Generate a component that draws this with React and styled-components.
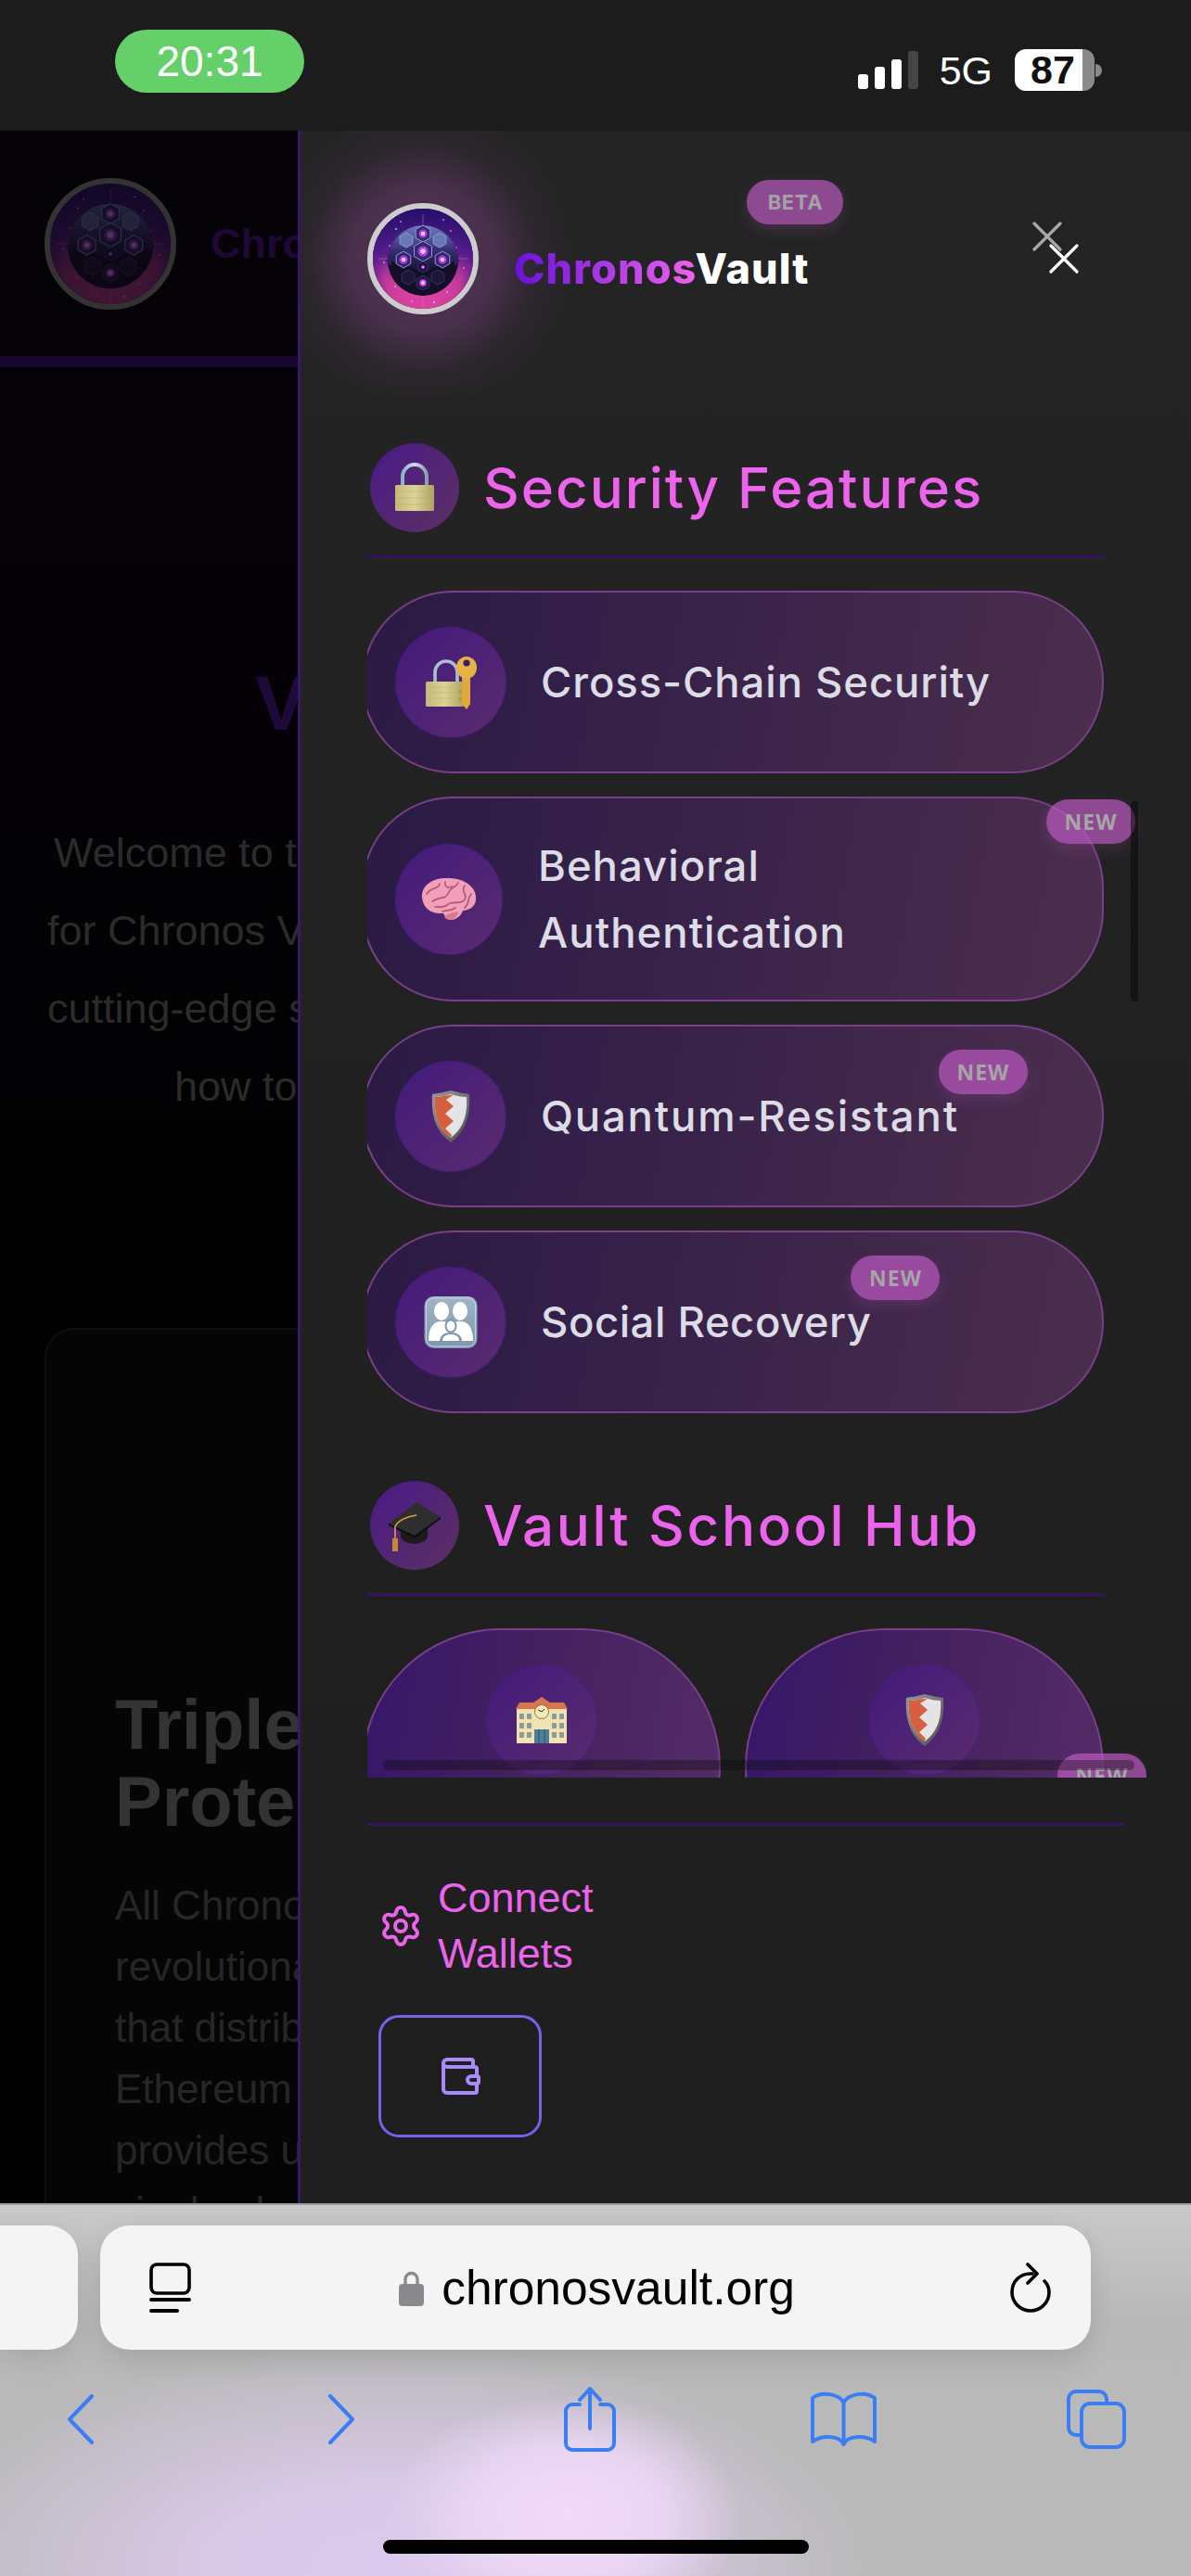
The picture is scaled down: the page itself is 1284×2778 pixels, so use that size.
import React from 'react';
import styled, { createGlobalStyle } from 'styled-components';
import { X, Settings, Wallet } from 'lucide-react';

const GlobalStyle = createGlobalStyle`
  html, body {
    margin: 0;
    padding: 0;
    background: #1c1c1c;
    overflow: hidden;
  }
  * { box-sizing: border-box; }
`;

const Screen = styled.div`
  width: 1284px;
  height: 2778px;
  display: flex;
  flex-direction: column;
  overflow: hidden;
  font-family: 'Liberation Sans', Arial, sans-serif;
`;

/* ---------- status bar ---------- */
const StatusBar = styled.div`
  height: 141px;
  flex: none;
  background: #1c1c1c;
  display: flex;
  justify-content: space-between;
  padding: 32px 96px 0 124px;
`;

const TimePill = styled.div`
  width: 204px;
  height: 68px;
  border-radius: 34px / 34px;
  background: #65d06a;
  color: #fff;
  font-size: 46px;
  line-height: 68px;
  text-align: center;
`;

const StatusRight = styled.div`
  display: flex;
  align-items: flex-end;
  height: 66px;
`;

const Bars = styled.div`
  display: flex;
  align-items: flex-end;
  gap: 7px;
  height: 41px;
  margin-bottom: 2px;
`;

const Bar = styled.div`
  width: 11px;
  height: ${p => p.$h}px;
  border-radius: 3px;
  background: ${p => (p.$off ? '#454545' : '#fff')};
`;

const Network = styled.div`
  color: #fff;
  font-size: 43px;
  line-height: 44px;
  margin: 0 24px 0 23px;
`;

const Battery = styled.div`
  position: relative;
  width: 86px;
  height: 45px;
  margin-right: 8px;
  border-radius: 12px;
  background: linear-gradient(90deg, #fff 85%, #8a8a8a 85%);
  color: #111;
  font-size: 43px;
  font-weight: 700;
  line-height: 45px;
  padding-left: 17px;

  &::after {
    content: '';
    position: absolute;
    left: 87px;
    top: 16px;
    width: 7px;
    height: 14px;
    border-radius: 0 7px 7px 0;
    background: #8a8a8a;
  }
`;

/* ---------- main split ---------- */
const Main = styled.div`
  flex: 1;
  min-height: 0;
  display: flex;
`;

const Backdrop = styled.div`
  width: 321px;
  flex: none;
  overflow: hidden;
  white-space: nowrap;
  background: linear-gradient(180deg, #060308 0%, #040206 30%, #000 60%);
`;

const PageHeader = styled.div`
  height: 243px;
  padding-left: 48px;
  display: flex;
  align-items: center;
  gap: 37px;
`;

const PageLogo = styled.div`
  width: 142px;
  height: 142px;
  flex: none;
  border-radius: 50%;
  border: 6px solid #333;
  overflow: hidden;
  background: #0c0610;

  svg {
    display: block;
    width: 100%;
    height: 100%;
    opacity: 0.26;
  }
`;

const PageBrand = styled.div`
  font-size: 45px;
  font-weight: 700;
  color: #1d0836;
`;

const PageRule = styled.div`
  height: 12px;
  background: #17062e;
`;

const PageTitle = styled.div`
  margin: 320px 0 78px 275px;
  font-size: 84px;
  line-height: 84px;
  font-weight: 700;
  color: #1e0a38;
`;

const PageLine = styled.div`
  padding-left: ${p => p.$pad}px;
  font-size: 45px;
  line-height: 84px;
  color: #2b2b2b;
`;

const PageCard = styled.div`
  margin: 218px 0 0 48px;
  width: 900px;
  height: 1200px;
  padding: 384px 0 0 74px;
  border: 2px solid #0f0f0f;
  border-radius: 32px;
  background: #050505;
`;

const PageCardTitle = styled.div`
  font-size: 76px;
  line-height: 83px;
  font-weight: 700;
  color: #333;
`;

const PageCardText = styled.div`
  margin-top: 38px;
  font-size: 44px;
  line-height: 66px;
  color: #262626;
`;

/* ---------- drawer ---------- */
const Panel = styled.div`
  flex: 1;
  min-width: 0;
  display: flex;
  flex-direction: column;
  border-left: 3px solid #37196a;
  background: linear-gradient(180deg, #242424 0%, #1e1e1e 100%);
`;

const PanelHeader = styled.div`
  position: relative;
  height: 289px;
  flex: none;
  padding: 78px 0 0 72px;
  display: flex;
  align-items: flex-start;
  gap: 38px;

  &::before {
    content: '';
    position: absolute;
    left: 0;
    top: 0;
    width: 300px;
    height: 289px;
    background: radial-gradient(circle 170px at 132px 138px, #503551 0%, #4a304d 45%, rgba(50, 40, 52, 0.6) 72%, rgba(36, 36, 36, 0) 100%);
  }
`;

const Logo = styled.div`
  position: relative;
  width: 120px;
  height: 120px;
  flex: none;
  border-radius: 50%;
  border: 6px solid #cdcdcd;
  overflow: hidden;

  svg {
    display: block;
    width: 100%;
    height: 100%;
  }
`;

const Brand = styled.div`
  position: relative;
  margin-top: 44px;
  font-family: Inter, sans-serif;
  font-size: 45px;
  line-height: 54px;
  font-weight: 800;
  color: #fff;
  letter-spacing: 1.1px;
`;

const BrandAccent = styled.span`
  background: linear-gradient(90deg, #6a10dc 0%, #ee62ee 100%);
  -webkit-background-clip: text;
  background-clip: text;
  color: transparent;
`;

const BetaBadge = styled.div`
  position: absolute;
  right: -37px;
  top: -69px;
  width: 104px;
  height: 48px;
  border-radius: 24px;
  background: #8d4a90;
  box-shadow: 0 6px 16px rgba(180, 90, 190, 0.22);
  color: #a3a3a3;
  font-family: Inter, sans-serif;
  font-size: 22px;
  font-weight: 700;
  letter-spacing: 0.6px;
  line-height: 48px;
  text-align: center;
`;

const CloseIcon = styled(X)`
  position: absolute;
  left: ${p => p.$x}px;
  top: ${p => p.$y}px;
  color: ${p => p.$color};
`;

const ScrollArea = styled.div`
  position: relative;
  width: 840px;
  height: 1487px;
  flex: none;
  margin-left: 72px;
  padding-top: 48px;
  overflow: hidden;
`;

const SectionHead = styled.div`
  display: flex;
  align-items: center;
  gap: 26px;
  padding-left: 3px;
  height: 96px;
  margin-top: ${p => p.$top || 0}px;
`;

const HeadIcon = styled.div`
  width: 96px;
  height: 96px;
  flex: none;
  border-radius: 50%;
  display: flex;
  align-items: center;
  justify-content: center;
  background: linear-gradient(135deg, #491a88 0%, #5c3062 100%);
`;

const HeadText = styled.div`
  font-family: Inter, sans-serif;
  font-size: 60px;
  font-weight: 500;
  color: #ec63ec;
  letter-spacing: ${p => p.$ls}px;
  white-space: nowrap;
`;

const Rule = styled.div`
  width: ${p => p.$w || 795}px;
  height: 3px;
  margin-top: 25px;
  background: #33155f;
`;

const CardList = styled.div`
  margin: 35px 0 0 -6px;
  width: 800px;
  display: flex;
  flex-direction: column;
  gap: 25px;
`;

const Card = styled.div`
  display: flex;
  align-items: center;
  padding: 36.5px 38px 36.5px 34px;
  gap: ${p => (p.$narrow ? 38 : 37)}px;
  border: 2px solid #7a3f8a;
  border-radius: 98px;
  background: linear-gradient(100deg, #2a1a44 0%, #39224a 45%, #4b2e4d 100%);
`;

const IconCircle = styled.div`
  width: ${p => (p.$narrow ? 116 : 120)}px;
  height: 120px;
  flex: none;
  border-radius: 50%;
  display: flex;
  align-items: center;
  justify-content: center;
  border: 1.5px solid #471c86;
  background: linear-gradient(135deg, #431a7c 0%, #5a2b6e 100%);
`;

const CardText = styled.div`
  position: relative;
  flex: ${p => (p.$fill ? 1 : 'none')};
  font-family: Inter, sans-serif;
  font-size: 45.5px;
  line-height: 72px;
  font-weight: 500;
  color: #dcdce6;
  letter-spacing: ${p => p.$ls || 0}px;
  white-space: nowrap;
`;

const NewBadge = styled.div`
  position: absolute;
  right: ${p => p.$right ?? -74}px;
  top: ${p => p.$top ?? -36}px;
  width: 96px;
  height: 48px;
  border-radius: 24px;
  background: rgba(190, 90, 195, 0.7);
  box-shadow: 0 6px 16px rgba(180, 90, 190, 0.2);
  color: #a6a6a6;
  font-family: 'Open Sans', sans-serif;
  font-size: 23px;
  font-weight: 700;
  letter-spacing: 1px;
  line-height: 48px;
  text-align: center;
`;

const TileGrid = styled.div`
  display: grid;
  grid-template-columns: 387px 387px;
  gap: 26px;
  width: 800px;
  margin: 35px 0 0 -6px;
`;

const Tile = styled.div`
  position: relative;
  height: 300px;
  padding-top: 37px;
  display: flex;
  justify-content: center;
  border: 2px solid #7a3f8a;
  border-radius: 172px;
  background: linear-gradient(100deg, #36166a 0%, #44215f 45%, #552c68 100%);
`;

const VerticalTrack = styled.div`
  position: absolute;
  left: 823px;
  top: 434px;
  width: 8px;
  height: 216px;
  border-radius: 4px;
  background: rgba(10, 10, 10, 0.55);
`;

const HorizontalTrack = styled.div`
  position: absolute;
  left: 17px;
  top: 1468px;
  width: 810px;
  height: 11px;
  border-radius: 6px;
  background: rgba(10, 10, 10, 0.36);
`;

const Footer = styled.div`
  padding: 24px 0 0 72px;
`;

const FooterLink = styled.div`
  display: flex;
  align-items: center;
  gap: 16px;
  margin: 48px 0 0 12px;
  color: #ec63ec;
  font-size: 45px;
  line-height: 60px;
`;

const WalletButton = styled.div`
  width: 176px;
  height: 132px;
  margin: 36px 0 0 12px;
  border: 3px solid #7c5fe8;
  border-radius: 22px;
  display: flex;
  align-items: center;
  justify-content: center;
  color: #a78bfa;
`;

/* ---------- safari chrome ---------- */
const Chrome = styled.div`
  height: 402px;
  flex: none;
  border-top: 2px solid #9c9c9c;
  padding-top: 22px;
  display: flex;
  flex-direction: column;
  background:
    radial-gradient(ellipse 190px 130px at 610px 335px, #f2daf8 0%, #e9d5f3 55%, rgba(226, 208, 238, 0) 100%),
    radial-gradient(ellipse 520px 240px at 420px 390px, #dcc9ee 0%, #d8c8e6 38%, rgba(187, 187, 187, 0) 100%),
    linear-gradient(180deg, #c9c9c9 0%, #b9b9b9 30%, #bababa 100%);
`;

const UrlRow = styled.div`
  display: flex;
  gap: 24px;
  height: 134px;
  flex: none;
`;

const PeekTab = styled.div`
  width: 84px;
  border-radius: 0 32px 32px 0;
  background: #f4f4f4;
  box-shadow: 0 10px 30px rgba(0, 0, 0, 0.1);
`;

const UrlBar = styled.div`
  width: 1068px;
  padding: 0 43px 0 53px;
  border-radius: 32px;
  background: #f4f4f4;
  box-shadow: 0 10px 30px rgba(0, 0, 0, 0.12);
  display: flex;
  align-items: center;
  justify-content: space-between;
`;

const UrlCenter = styled.div`
  display: flex;
  align-items: center;
  gap: 19px;
  margin-right: 8px;
  color: #000;
  font-size: 51.5px;
  line-height: 60px;
`;

const Toolbar = styled.div`
  display: flex;
  align-items: center;
  height: 71px;
  margin-top: 39px;
  flex: none;
`;

const ToolIcon = styled.svg`
  flex: none;
  margin-left: ${p => p.$gap}px;
  fill: none;
  stroke: #3a7ef5;
  stroke-width: 4;
  stroke-linecap: round;
  stroke-linejoin: round;
`;

const HomeBar = styled.div`
  width: 459px;
  height: 15px;
  margin: 95px 0 0 413px;
  border-radius: 8px;
  background: #000;
  flex: none;
`;

/* ---------- drawings ---------- */
const hexPoints = (cx, cy, r) =>
  [0, 60, 120, 180, 240, 300]
    .map(a => {
      const t = ((a + 30) * Math.PI) / 180;
      return `${(cx + r * Math.cos(t)).toFixed(1)},${(cy + r * Math.sin(t)).toFixed(1)}`;
    })
    .join(' ');

const orbNodes = [
  { x: 54, y: 27, r: 9, glow: 4.5 },
  { x: 54, y: 46, r: 11, glow: 5.5 },
  { x: 33, y: 55, r: 9, glow: 4.5 },
  { x: 75, y: 55, r: 9, glow: 4.5 },
  { x: 54, y: 80, r: 8, glow: 4 },
  { x: 36, y: 34, r: 8, glow: 0 },
  { x: 72, y: 34, r: 8, glow: 0 },
  { x: 38, y: 74, r: 8, glow: 0 },
  { x: 70, y: 74, r: 8, glow: 0 },
  { x: 54, y: 63, r: 6, glow: 2 },
];

const sparks = [
  [25, 22, '#7ff'], [84, 24, '#f7a'], [90, 42, '#f7a'], [18, 40, '#f7a'], [24, 84, '#f9c'],
  [80, 90, '#f9c'], [30, 14, '#c8f'], [76, 12, '#c8f'], [12, 58, '#e8f'], [98, 64, '#f8c'],
  [42, 100, '#f8c'], [66, 101, '#fcf'],
];

function Orb({ id = 'orb' }) {
  return (
    <svg viewBox="0 0 108 108">
      <defs>
        <radialGradient id={`${id}-bg`} cx="50%" cy="66%" r="60%">
          <stop offset="0%" stopColor="#f04fb0" />
          <stop offset="62%" stopColor="#d23f9a" />
          <stop offset="82%" stopColor="#7a2590" />
          <stop offset="100%" stopColor="#3c1474" />
        </radialGradient>
        <linearGradient id={`${id}-veil`} x1="0" y1="0" x2="0" y2="1">
          <stop offset="0%" stopColor="#26106a" />
          <stop offset="45%" stopColor="#4a1a8a" stopOpacity="0.82" />
          <stop offset="72%" stopColor="#7a2590" stopOpacity="0.2" />
          <stop offset="100%" stopColor="#c03490" stopOpacity="0" />
        </linearGradient>
        <linearGradient id={`${id}-shell`} x1="0" y1="0" x2="0" y2="1">
          <stop offset="0%" stopColor="#6f7cc0" />
          <stop offset="50%" stopColor="#3a2f78" />
          <stop offset="100%" stopColor="#140e28" />
        </linearGradient>
      </defs>
      <rect width="108" height="108" fill={`url(#${id}-bg)`} />
      <rect width="108" height="108" fill={`url(#${id}-veil)`} />
      {sparks.map(([x, y, c], i) => <circle key={i} cx={x} cy={y} r="0.9" fill={c} />)}
      <path d="M54 6 V18 M54 92 V106 M6 54 H16 M92 54 H102" stroke="#e88ae8" strokeWidth="0.7" opacity="0.6" />
      <circle cx="54" cy="56" r="38" fill="#140e28" />
      <path d="M16 56 A38 38 0 0 1 92 56 L70 62 L54 70 L38 62 Z" fill={`url(#${id}-shell)`} />
      <path d="M14 56 L20 50 L20 62 Z M94 56 L88 50 L88 62 Z" fill="#2a2458" />
      {orbNodes.map((n, i) => (
        <g key={i}>
          <polygon
            points={hexPoints(n.x, n.y, n.r)}
            fill={n.y > 62 ? '#1e1638' : n.glow ? '#33286c' : '#6579b4'}
            stroke={n.y > 62 ? '#3b2f6c' : '#8f9ad0'}
            strokeWidth="1"
          />
          {n.glow > 0 && <circle cx={n.x} cy={n.y} r={n.glow} fill="#b43ae8" />}
          {n.glow > 0 && <circle cx={n.x} cy={n.y} r={n.glow / 2} fill="#f6c8ff" />}
        </g>
      ))}
    </svg>
  );
}

const EmojiSvg = ({ children, size = 60 }) => (
  <svg width={size} height={size} viewBox="0 0 60 60">{children}</svg>
);

function LockEmoji() {
  return (
    <EmojiSvg>
      <defs>
        <linearGradient id="brass" x1="0" y1="0" x2="1" y2="0">
          <stop offset="0%" stopColor="#c2b878" />
          <stop offset="50%" stopColor="#dcd396" />
          <stop offset="100%" stopColor="#ada162" />
        </linearGradient>
        <linearGradient id="steel" x1="0" y1="0" x2="1" y2="0">
          <stop offset="0%" stopColor="#8fb0c8" />
          <stop offset="50%" stopColor="#d0dfe8" />
          <stop offset="100%" stopColor="#8a9cb0" />
        </linearGradient>
      </defs>
      <path d="M17 29 V18 a13 13 0 0 1 26 0 V29" fill="none" stroke="url(#steel)" strokeWidth="4" />
      <rect x="9" y="27" width="42" height="28" rx="1.5" fill="url(#brass)" />
      <path d="M9 34 H51 M9 41 H51 M9 48 H51" stroke="#b8ae70" strokeWidth="0.6" />
    </EmojiSvg>
  );
}

function LockKeyEmoji() {
  return (
    <EmojiSvg>
      <defs>
        <linearGradient id="brass2" x1="0" y1="0" x2="1" y2="0">
          <stop offset="0%" stopColor="#c2b878" />
          <stop offset="50%" stopColor="#dcd396" />
          <stop offset="100%" stopColor="#ada162" />
        </linearGradient>
      </defs>
      <path d="M13 32 V19 a12 12 0 0 1 24 0 V32" fill="none" stroke="#a9c0d2" strokeWidth="3.6" />
      <rect x="3" y="29" width="41" height="27" rx="1.5" fill="url(#brass2)" />
      <path d="M3 35 H44 M3 41 H44 M3 47 H44" stroke="#b8ae70" strokeWidth="0.6" />
      <path d="M42 18 V53 L47 59 L51 53 V18 Z" fill="#e0a93e" />
      <path d="M42 38 h-3 v4 h3 M42 46 h-3 v4 h3" fill="#c8942e" />
      <ellipse cx="47" cy="14" rx="11" ry="12" fill="#e8b247" />
      <circle cx="47" cy="9" r="3.6" fill="#3b1c66" />
    </EmojiSvg>
  );
}

function BrainEmoji() {
  return (
    <EmojiSvg>
      <path d="M1 28 C0 15 12 7 27 7 C43 6 58 14 59 27 C60 38 51 42 45 42 C43 49 34 55 27 50 C24 47 26 45 22 45 C11 46 2 39 1 28 Z" fill="#f0a0b8" />
      <path d="M40 43 C39 51 30 55 25 49 C29 45 35 44 40 43 Z" fill="#d67a92" />
      <g fill="none" stroke="#b9557a" strokeWidth="1.7" strokeLinecap="round">
        <path d="M6 24 C11 16 18 20 20 13 M12 32 C21 26 26 31 30 22 C32 16 38 17 40 12" />
        <path d="M47 15 C42 23 51 24 47 30 C42 37 34 30 28 36 C24 39 18 38 15 38" />
        <path d="M54 24 C49 30 53 34 47 39 M37 39 C32 43 28 41 23 43 M26 11 C25 17 30 18 33 16" />
      </g>
    </EmojiSvg>
  );
}

function ShieldEmoji({ id = 'a' }) {
  return (
    <EmojiSvg>
      <defs>
        <linearGradient id={`rim-${id}`} x1="0" y1="0" x2="1" y2="1">
          <stop offset="0%" stopColor="#9a9a9a" />
          <stop offset="100%" stopColor="#4e4e4e" />
        </linearGradient>
      </defs>
      <path d="M30 2 C37 4 44 5 50 6 C51 24 49 44 30 58 C11 44 9 24 10 6 C16 5 23 4 30 2 Z" fill={`url(#rim-${id})`} />
      <path d="M30 6 C36 8 42 9 47 9 C48 24 46 41 30 53 C14 41 12 24 13 9 C18 9 24 8 30 6 Z" fill="#e4e4e6" />
      <path d="M33 6.8 L24 7.5 C20 8.5 16 9 13 9 C12 24 14 41 30 53 L31 50 L24 43 L33 35 L24 27 L33 19 L25 12 Z" fill="#d4603f" />
    </EmojiSvg>
  );
}

function FamilyEmoji() {
  return (
    <EmojiSvg>
      <defs>
        <linearGradient id="tile" x1="0" y1="0" x2="0" y2="1">
          <stop offset="0%" stopColor="#9fb4c8" />
          <stop offset="100%" stopColor="#7e97ad" />
        </linearGradient>
      </defs>
      <rect x="1.5" y="2" width="57" height="56" rx="10" fill="url(#tile)" />
      <rect x="3.5" y="4" width="53" height="52" rx="8" fill="none" stroke="#c6d4e0" strokeWidth="1" />
      <g fill="#fff">
        <ellipse cx="20" cy="18" rx="8" ry="10" />
        <ellipse cx="40" cy="18" rx="8" ry="10" />
        <path d="M6 50 C6 36 11 29 20 29 C25 29 28 31 30 34 C32 31 35 29 40 29 C49 29 54 36 54 50 Z" />
      </g>
      <ellipse cx="30" cy="34" rx="6.5" ry="7.5" fill="#7e97ad" />
      <ellipse cx="30" cy="34" rx="4.5" ry="5.5" fill="#fff" />
      <path d="M18 51 C18 44 23 41 30 41 C37 41 42 44 42 51 Z" fill="#7e97ad" />
      <path d="M21 50 C21 45 25 43 30 43 C35 43 39 45 39 50 Z" fill="#fff" />
    </EmojiSvg>
  );
}

function CapEmoji() {
  return (
    <EmojiSvg>
      <path d="M15 30 V43 C19 52 40 52 44 43 V28 Z" fill="#1c1c1c" />
      <path d="M2 28 L32 5 L58 21 L30 41 Z" fill="#2e2e2e" />
      <path d="M2 28 L30 41 L58 21 L58 23 L30 44 L2 30 Z" fill="#0f0f0f" />
      <path d="M32 19 C22 20 12 25 9 31 V44" fill="none" stroke="#dca23c" strokeWidth="1.6" />
      <path d="M6 44 L12 44 L12 58 L6 58 Z" fill="#c88a2e" />
    </EmojiSvg>
  );
}

function SchoolEmoji() {
  return (
    <EmojiSvg>
      <rect x="3" y="18" width="54" height="37" fill="#efe3b4" />
      <path d="M2 18 L6 11 H21 L30 5 L39 11 H54 L58 18 Z" fill="#d8744e" />
      <circle cx="30" cy="21" r="7.5" fill="#f4e9b8" stroke="#8f7a3e" strokeWidth="1" />
      <path d="M30 21 L26 19 M30 21 L33 18" stroke="#333" strokeWidth="1" />
      <rect x="22" y="40" width="16" height="15" fill="#4f7f98" />
      <path d="M27 40 V55 M33 40 V55" stroke="#2f4f60" strokeWidth="1" />
      <g fill="#8d9c9a">
        <rect x="6" y="23" width="5" height="6" /><rect x="14" y="23" width="5" height="6" />
        <rect x="41" y="23" width="5" height="6" /><rect x="49" y="23" width="5" height="6" />
        <rect x="6" y="33" width="5" height="6" /><rect x="14" y="33" width="5" height="6" />
        <rect x="41" y="33" width="5" height="6" /><rect x="49" y="33" width="5" height="6" />
        <rect x="6" y="43" width="5" height="6" /><rect x="14" y="43" width="5" height="6" />
        <rect x="41" y="43" width="5" height="6" /><rect x="49" y="43" width="5" height="6" />
      </g>
    </EmojiSvg>
  );
}

const features = [
  { label: 'Cross-Chain Security', icon: <LockKeyEmoji />, ls: 0.9 },
  { label: <>Behavioral<br />Authentication</>, icon: <BrainEmoji />, badge: true, narrow: true, ls: 1 },
  { label: 'Quantum-Resistant', icon: <ShieldEmoji id="q" />, badge: true, ls: 1.8 },
  { label: 'Social Recovery', icon: <FamilyEmoji />, badge: true, ls: 0.5 },
];

export default function App() {
  return (
    <Screen>
      <GlobalStyle />
      <StatusBar>
        <TimePill>20:31</TimePill>
        <StatusRight>
          <Bars>
            <Bar $h={16} />
            <Bar $h={24} />
            <Bar $h={32} />
            <Bar $h={41} $off />
          </Bars>
          <Network>5G</Network>
          <Battery>87</Battery>
        </StatusRight>
      </StatusBar>

      <Main>
        <Backdrop>
          <PageHeader>
            <PageLogo><Orb id="bgorb" /></PageLogo>
            <PageBrand>Chronos Vault</PageBrand>
          </PageHeader>
          <PageRule />
          <PageTitle>Vault</PageTitle>
          <PageLine $pad={58}>Welcome to the</PageLine>
          <PageLine $pad={51}>for Chronos Vault</PageLine>
          <PageLine $pad={51}>cutting-edge security</PageLine>
          <PageLine $pad={188}>how to</PageLine>
          <PageCard>
            <PageCardTitle>Triple<br />Protection</PageCardTitle>
            <PageCardText>
              All Chronos<br />revolutionary<br />that distributes<br />Ethereum<br />provides unmatched<br />single-chain
            </PageCardText>
          </PageCard>
        </Backdrop>

        <Panel>
          <PanelHeader>
            <Logo><Orb /></Logo>
            <Brand>
              <BrandAccent>Chronos</BrandAccent>Vault
              <BetaBadge>BETA</BetaBadge>
            </Brand>
            <CloseIcon $x={777} $y={86} $color="#a9a9a9" size={56} strokeWidth={1.4} />
            <CloseIcon $x={795} $y={110} $color="#ffffff" size={56} strokeWidth={1.4} />
          </PanelHeader>

          <ScrollArea>
            <SectionHead>
              <HeadIcon><LockEmoji /></HeadIcon>
              <HeadText $ls={2}>Security Features</HeadText>
            </SectionHead>
            <Rule />
            <CardList>
              {features.map((f, i) => (
                <Card key={i} $narrow={f.narrow}>
                  <IconCircle $narrow={f.narrow}>{f.icon}</IconCircle>
                  <CardText $fill={f.narrow} $ls={f.ls}>
                    {f.label}
                    {f.badge && <NewBadge>NEW</NewBadge>}
                  </CardText>
                </Card>
              ))}
            </CardList>

            <SectionHead $top={73}>
              <HeadIcon><CapEmoji /></HeadIcon>
              <HeadText $ls={2.7}>Vault School Hub</HeadText>
            </SectionHead>
            <Rule />
            <TileGrid>
              <Tile>
                <IconCircle><SchoolEmoji /></IconCircle>
              </Tile>
              <Tile>
                <IconCircle><ShieldEmoji id="t" /></IconCircle>
                <NewBadge $right={-48} $top={133}>NEW</NewBadge>
              </Tile>
            </TileGrid>
            <VerticalTrack />
            <HorizontalTrack />
          </ScrollArea>

          <Footer>
            <Rule $w={816} />
            <FooterLink>
              <Settings size={48} />
              <div>Connect<br />Wallets</div>
            </FooterLink>
            <WalletButton><Wallet size={48} /></WalletButton>
          </Footer>
        </Panel>
      </Main>

      <Chrome>
        <UrlRow>
          <PeekTab />
          <UrlBar>
            <svg width="45" height="54" viewBox="0 0 45 54" fill="none" stroke="#000" strokeWidth="3.6" strokeLinecap="round">
              <rect x="2" y="2" width="41" height="31" rx="6" />
              <path d="M2 40 H43 M2 52 H30" strokeWidth="4" />
            </svg>
            <UrlCenter>
              <svg width="27" height="39" viewBox="0 0 27 39">
                <path d="M7 18 V10 a6.5 6.5 0 0 1 13 0 V18" fill="none" stroke="#8a8a8e" strokeWidth="3.4" />
                <rect x="0" y="15" width="27" height="24" rx="4" fill="#8a8a8e" />
              </svg>
              chronosvault.org
            </UrlCenter>
            <svg width="44" height="54" viewBox="0 0 44 54" fill="none" stroke="#000" strokeWidth="3.6" strokeLinecap="round" strokeLinejoin="round">
              <path d="M24 12 C10 11 2 21 2 32 C2 43 11 52 22 52 C33 52 42 43 42 32 C42 27 40 23 37 20" />
              <path d="M19 2 L29 12 L19 22" />
            </svg>
          </UrlBar>
        </UrlRow>
        <Toolbar>
          <ToolIcon $gap={72} width="30" height="54" viewBox="0 0 30 54">
            <path d="M27 2 L3 27 L27 52" />
          </ToolIcon>
          <ToolIcon $gap={250} width="31" height="54" viewBox="0 0 31 54">
            <path d="M4 2 L28 27 L4 52" />
          </ToolIcon>
          <ToolIcon $gap={225} width="56" height="71" viewBox="0 0 56 71">
            <path d="M17 20 H9 a7 7 0 0 0 -7 7 V62 a7 7 0 0 0 7 7 H47 a7 7 0 0 0 7 -7 V27 a7 7 0 0 0 -7 -7 H39" />
            <path d="M28 46 V3 M17 15 L28 3 L39 15" />
          </ToolIcon>
          <ToolIcon $gap={210} width="71" height="59" viewBox="0 0 71 59">
            <path d="M35.5 12 C31 3 12 -1 2 7 V54 C12 47 31 47 35.5 57 C40 47 59 47 69 54 V7 C59 -1 40 3 35.5 12 Z" />
            <path d="M35.5 12 V57" />
          </ToolIcon>
          <ToolIcon $gap={204} width="66" height="66" viewBox="0 0 66 66">
            <path d="M15 50 H11 a8 8 0 0 1 -8 -8 V11 a8 8 0 0 1 8 -8 H36 a8 8 0 0 1 8 8 V16" />
            <rect x="17" y="16" width="46" height="47" rx="9" />
          </ToolIcon>
        </Toolbar>
        <HomeBar />
      </Chrome>
    </Screen>
  );
}
